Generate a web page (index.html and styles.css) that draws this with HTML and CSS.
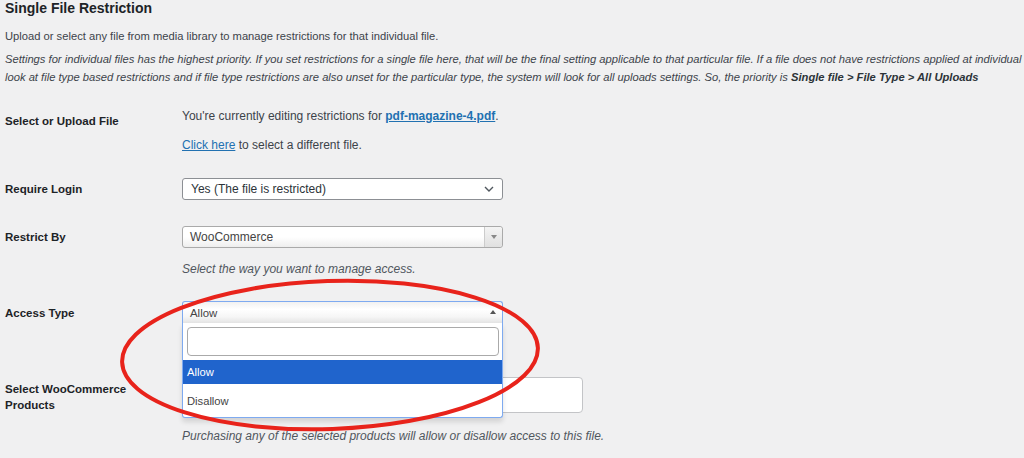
FILE: index.html
```html
<!DOCTYPE html>
<html lang="en">
<head>
  <meta charset="UTF-8"/>
  <title>Single File Restriction</title>
  <link rel="stylesheet" href="styles.css">
</head>
<body>
  <div class="page">
    <h2>Single File Restriction</h2>
    <p class="intro">Upload or select any file from media library to manage restrictions for that individual file.</p>
    <p class="note">Settings for individual files has the highest priority. If you set restrictions for a single file here, that will be the final setting applicable to that particular file. If a file does not have restrictions applied at individual level, the system will<br>look at file type based restrictions and if file type restrictions are also unset for the particular type, the system will look for all uploads settings. So, the priority is <b>Single file &gt; File Type &gt; All Uploads</b></p>

    <div class="row r-file">
      <div class="label">Select or Upload File</div>
      <div class="field">
        <p>You're currently editing restrictions for <a href="#" class="file-link">pdf-magazine-4.pdf</a>.</p>
        <p class="second"><a href="#">Click here</a> to select a different file.</p>
      </div>
    </div>

    <div class="row r-login">
      <div class="label">Require Login</div>
      <div class="field">
        <div class="native-select">
          <span>Yes (The file is restricted)</span>
          <svg class="chev" width="10" height="6" viewBox="0 0 10 6"><path d="M1 1l4 4 4-4" fill="none" stroke="#50575e" stroke-width="1.4"/></svg>
        </div>
      </div>
    </div>

    <div class="row r-by">
      <div class="label">Restrict By</div>
      <div class="field">
        <div class="s2-choice">
          <span>WooCommerce</span>
          <div class="s2-arrow"><i></i></div>
        </div>
        <p class="desc">Select the way you want to manage access.</p>
      </div>
    </div>

    <div class="row r-access">
      <div class="label">Access Type</div>
      <div class="field">
        <div class="s2-wrap">
          <div class="s2-choice open">
            <span>Allow</span>
            <div class="s2-arrow up"><i></i></div>
          </div>
          <div class="s2-drop">
            <div class="s2-search"><input type="text"/></div>
            <ul class="s2-results">
              <li class="hl">Allow</li>
              <li>Disallow</li>
            </ul>
          </div>
        </div>
      </div>
    </div>

    <div class="row r-products">
      <div class="label">Select WooCommerce<br>Products</div>
      <div class="field">
        <div class="multi-input"></div>
        <p class="desc">Purchasing any of the selected products will allow or disallow access to this file.</p>
      </div>
    </div>
  </div>

  <!-- hand-drawn annotation over the open dropdown -->
  <svg class="mark" width="1024" height="458" viewBox="0 0 1024 458">
    <ellipse cx="330" cy="355" rx="208" ry="74" transform="rotate(-2 330 355)" fill="none" stroke="#e8231b" stroke-width="4"/>
  </svg>
</body>
</html>
```

FILE: styles.css
```css
*{box-sizing:border-box;margin:0;padding:0;}
html,body{width:1024px;height:458px;overflow:hidden;}
body{background:#f0f0f1;color:#3c434a;font-family:"Liberation Sans",Arial,sans-serif;font-size:11.2px;line-height:16px;}
.page{padding:0 0 0 5px;}
h2{font-size:14px;line-height:16px;font-weight:bold;color:#1d2327;}
.intro{margin-top:12px;}
.note{margin-top:6px;line-height:18px;font-style:italic;white-space:nowrap;}
.note b{color:#2c3338;}
a{color:#2271b1;text-decoration:underline;}
.file-link{font-weight:bold;}

.row{display:grid;grid-template-columns:177px 1fr;align-items:start;}
.label{font-weight:bold;color:#1d2327;font-size:11.5px;}
.field{font-size:12px;}
.r-file{margin-top:22px;}
.r-file .label{padding-top:5px;}
.r-file .second{margin-top:13px;}
.r-login{margin-top:25px;}
.r-login .label{padding-top:3px;}
.r-by{margin-top:26px;}
.r-by .label{padding-top:3px;}
.r-access{margin-top:24px;}
.r-access .label{padding-top:4px;}
.r-products{margin-top:54px;}
.r-products .label{padding-top:4px;}
.desc{font-style:italic;color:#50575e;margin-top:13px;}
.r-products .desc{margin-top:15px;}

.native-select{width:321px;height:22px;background:#fff;border:1px solid #8c8f94;border-radius:3px;display:flex;align-items:center;justify-content:space-between;padding:0 8px 0 8px;color:#2c3338;}
.chev{display:block;}

.s2-choice{position:relative;width:321px;height:22px;border:1px solid #aaa;border-radius:3px;background:linear-gradient(to bottom,#fff 0%,#fff 50%,#eee 100%);display:flex;align-items:center;padding-left:7px;color:#444;}
.s2-arrow{position:absolute;right:0;top:0;bottom:0;width:18px;border-left:1px solid #ccc;border-radius:0 3px 3px 0;background:linear-gradient(to bottom,#f4f4f4,#e0e0e0);display:flex;align-items:center;justify-content:center;}
.s2-arrow i{display:block;width:0;height:0;border-left:3px solid transparent;border-right:3px solid transparent;border-top:4px solid #888;}
.s2-wrap{position:relative;width:321px;height:22px;font-size:11.4px;}
.s2-choice.open{border-color:#7eaaf0;border-bottom:none;border-radius:3px 3px 0 0;background:linear-gradient(to bottom,#f1f1f1 0%,#fff 35%,#f6f6f6 70%,#e4e4e4 100%);padding-left:7px;}
.s2-arrow.up{border-left:none;background:none;align-items:flex-start;padding-top:8px;}
.s2-arrow.up i{border-top:none;border-bottom:4px solid #555;}
.s2-drop{position:absolute;left:0;top:22px;width:321px;height:95px;background:#fff;border:1px solid #7eaaf0;border-top:none;border-radius:0 0 3px 3px;box-shadow:0 4px 5px rgba(0,0,0,.12);}
.s2-search{padding:4px 3px 0 4px;}
.s2-search input{display:block;width:100%;height:29px;border:1px solid #aaa;border-radius:4px;background:#fff;outline:none;}
.s2-results{list-style:none;margin-top:4px;font-size:11.2px;}
.s2-results li{height:24px;line-height:24px;padding-left:4px;color:#444;}
.s2-results li+li{height:34px;padding-top:5px;line-height:24px;}
.s2-results li.hl{background:#2064cc;color:#fff;}

.multi-input{width:401px;height:36px;background:#fff;border:1px solid #c3c4c7;border-radius:4px;}

.mark{position:absolute;left:0;top:0;pointer-events:none;}
```
